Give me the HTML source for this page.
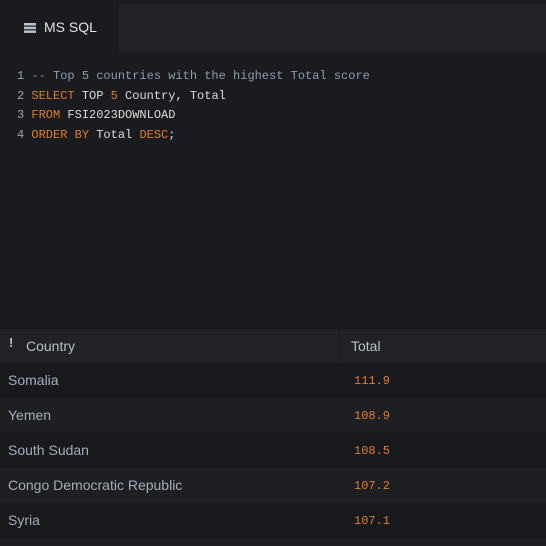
<!DOCTYPE html>
<html><head><style>
body{margin:0;width:546px;height:546px;background:#1a1b1f;overflow:hidden;position:relative;font-family:"Liberation Sans",sans-serif}
.bar{position:absolute;left:119px;top:4px;right:0;height:49px;background:#212226}
.tab{position:absolute;left:24px;top:19px;color:#dfe3e8;font-size:14px}
.ic{position:absolute;left:24px;top:23px;width:12px;height:10px}
.code{position:absolute;left:17px;top:67px;font-family:"Liberation Mono",monospace;font-size:12px;line-height:19.7px;color:#dcdcdc;white-space:pre}
.n{color:#9aa3ad}.k{color:#e07b2a}.c{color:#8d9bab}.num{color:#e07b2a}
.sep{position:absolute;left:0;top:313px;width:546px;height:16px;background:#18191d}
.row{position:absolute;left:0;width:546px;height:35px;font-size:14px;color:#a5adb8}
.row span{position:absolute;top:9px}
.v{left:354px;font-family:"Liberation Mono",monospace;font-size:12px;color:#e07b2a;top:11px!important}
</style></head><body>
<div class="bar"></div>
<svg class="ic" viewBox="0 0 12 10"><rect x="0" y="0" width="12" height="2.5" fill="#b8c0c8"/><rect x="0" y="3.7" width="12" height="2.5" fill="#b8c0c8"/><rect x="0" y="7.4" width="12" height="2.5" fill="#b8c0c8"/></svg>
<div class="tab" style="left:44px">MS SQL</div>
<div class="code"><span class="n">1</span> <span class="c">-- Top 5 countries with the highest Total score</span>
<span class="n">2</span> <span class="k">SELECT</span> TOP <span class="num">5</span> Country, Total
<span class="n">3</span> <span class="k">FROM</span> FSI2023DOWNLOAD
<span class="n">4</span> <span class="k">ORDER BY</span> Total <span class="k">DESC</span>;</div>
<div class="sep"></div>
<div class="row" style="top:329px;height:34px;background:#212226;color:#b8c0c8"><span style="left:9px;top:6px;font-weight:bold;font-size:13px">!</span><span style="left:26px;top:9px">Country</span><div style="position:absolute;left:339px;top:0;width:1px;height:34px;background:#1a1b1f"></div><span style="left:351px;top:9px">Total</span></div>
<div class="row" style="top:363px;background:#18191d"><span style="left:8px">Somalia</span><span class="v">111.9</span></div>
<div class="row" style="top:398px;background:#1e1f23"><span style="left:8px">Yemen</span><span class="v">108.9</span></div>
<div class="row" style="top:433px;background:#18191d"><span style="left:8px">South Sudan</span><span class="v">108.5</span></div>
<div class="row" style="top:468px;background:#1e1f23"><span style="left:8px">Congo Democratic Republic</span><span class="v">107.2</span></div>
<div class="row" style="top:503px;background:#18191d"><span style="left:8px">Syria</span><span class="v">107.1</span></div>
<div class="row" style="top:538px;height:8px;background:#1e1f23"></div>
</body></html>
